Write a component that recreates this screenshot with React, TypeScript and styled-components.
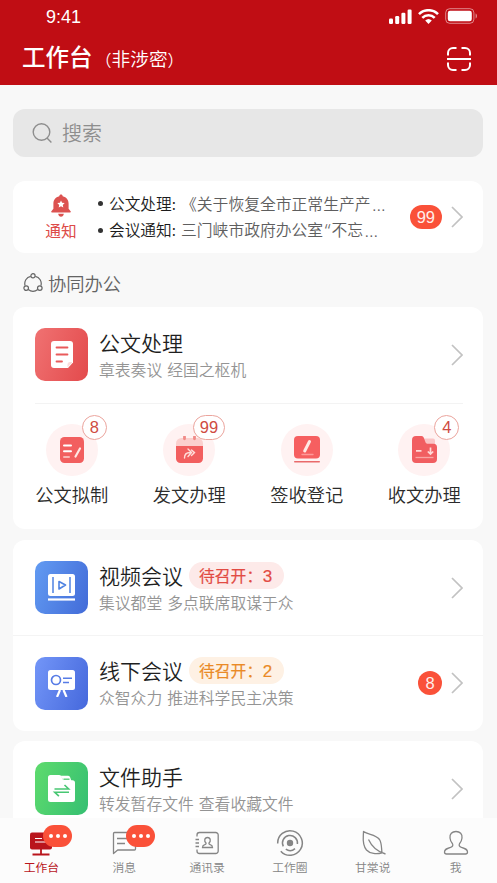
import React from "react";
import styled, { createGlobalStyle } from "styled-components";

const cjk = `"Noto Sans CJK SC DemiLight", "Noto Sans CJK SC", sans-serif`;

const Global = createGlobalStyle`
  * { box-sizing: border-box; }
  body { margin: 0; }
`;

const Screen = styled.div`
  display: flex;
  flex-direction: column;
  width: 497px;
  height: 883px;
  overflow: hidden;
  background: #f8f8f8;
  font-family: ${cjk};
  font-weight: 350;
  color: #2b2b2b;
  svg { display: block; flex: none; }
`;

const Header = styled.header`
  flex: none;
  height: 85px;
  background: #c00d14;
  color: #fff;
`;

const StatusBar = styled.div`
  display: flex;
  align-items: center;
  justify-content: space-between;
  height: 34px;
  padding: 0 19px 0 46px;
`;

const Clock = styled.span`
  font: 400 18px/34px "Liberation Sans", sans-serif;
`;

const StatusIcons = styled.div`
  display: flex;
  align-items: center;
  gap: 6px;
  padding-bottom: 2px;
`;

const TitleBar = styled.div`
  display: flex;
  align-items: center;
  height: 50px;
  padding: 0 25px 0 22px;
`;

const PageTitle = styled.h1`
  margin: 0;
  padding-bottom: 7px;
  font: 500 23.5px/40px "Noto Sans CJK SC Medium", "Noto Sans CJK SC", sans-serif;
`;

const PageNote = styled.span`
  flex: 1;
  padding: 0 0 2px 3px;
  font-size: 18.7px;
  line-height: 40px;
`;

const Paren = styled.span`
  font-size: 16px;
`;

const Content = styled.main`
  flex: 1;
  min-height: 0;
  overflow: hidden;
  padding: 24px 14px 0 13px;
`;

const SearchBox = styled.div`
  display: flex;
  align-items: center;
  gap: 10px;
  height: 48px;
  padding-left: 19px;
  border-radius: 12px;
  background: #e7e7e7;
  color: #8e8e8e;
  font-size: 20px;
  line-height: 48px;
`;

const Card = styled.section<{ $gap: number; $height?: number }>`
  margin-top: ${(p) => p.$gap}px;
  height: ${(p) => (p.$height ? `${p.$height}px` : "auto")};
  border-radius: 12px;
  background: #fff;
`;

const NoticeCard = styled(Card)`
  display: flex;
  align-items: center;
  padding-right: 20px;
`;

const NoticeLabel = styled.div`
  display: flex;
  flex-direction: column;
  align-items: center;
  gap: 1px;
  width: 96px;
  padding-top: 3px;
  color: #dd4b48;
  font-size: 15.7px;
  font-weight: 400;
  line-height: 25px;
  font-family: "Noto Sans CJK SC", sans-serif;
`;

const NoticeList = styled.ul`
  flex: 1;
  margin: 0 0 0 -11px;
  padding: 0;
  list-style: none;
`;

const NoticeItem = styled.li`
  display: flex;
  align-items: center;
  height: 26.5px;
  font-size: 15.8px;
  line-height: 26px;
  white-space: nowrap;
  color: #5e5e5e;
  &::before {
    content: "";
    width: 5px;
    height: 5px;
    margin-right: 6px;
    border-radius: 50%;
    background: #333;
  }
`;

const NoticeKind = styled.b`
  margin-right: 5px;
  font-size: 15.7px;
  font-weight: 350;
  color: #1c1c1c;
`;

/* Quotes and ellipses take their narrow Latin forms. */
const Punct = styled.span`
  margin: 0 1px 0 1.5px;
  font-family: "Noto Sans", sans-serif;
  font-size: 18.5px;
  font-weight: 300;
`;

const CountBadge = styled.span`
  min-width: 24px;
  height: 24px;
  margin-right: 9px;
  padding: 0 7px;
  border-radius: 12px;
  background: #fa5139;
  color: #ffeeea;
  text-align: center;
  font: 400 16.5px/24px "Liberation Sans", sans-serif;
`;

const SectionTitle = styled.h2`
  display: flex;
  align-items: center;
  gap: 5px;
  height: 54.5px;
  margin: 0;
  padding: 6px 0 0 10px;
  font-size: 18.3px;
  font-weight: 350;
  line-height: 46px;
  color: #636363;
`;

const Row = styled.div<{ $divided?: boolean }>`
  display: flex;
  align-items: center;
  height: 95.5px;
  padding: ${(p) => (p.$divided ? "1px" : "0")} 20px 0 22px;
  border-bottom: ${(p) => (p.$divided ? "1px solid #f4f4f4" : "0")};
`;

const AppIcon = styled.div<{ $from: string; $to: string }>`
  display: flex;
  align-items: center;
  justify-content: center;
  width: 53px;
  height: 53px;
  border-radius: 10px;
  background: linear-gradient(110deg, ${(p) => p.$from}, ${(p) => p.$to});
`;

const RowText = styled.div`
  flex: 1;
  margin-left: 11px;
`;

const RowTitle = styled.div`
  display: flex;
  align-items: center;
  height: 29px;
  font-size: 21px;
  line-height: 29px;
  color: #1f1f1f;
`;

const RowNote = styled.div`
  height: 25px;
  font-size: 15.8px;
  line-height: 25px;
  word-spacing: 1.5px;
  color: #949494;
`;

const Tag = styled.span<{ $color: string; $bg: string }>`
  width: 95px;
  height: 27px;
  margin-left: 6px;
  padding-left: 10px;
  border-radius: 14px;
  background: ${(p) => p.$bg};
  color: ${(p) => p.$color};
  font: 400 15.8px/27px "Noto Sans CJK SC", sans-serif;
  -webkit-text-stroke: 0.2px currentColor;
`;

const TagCount = styled.span`
  margin-left: 0.5px;
  font: 400 17px/27px "Liberation Sans", sans-serif;
`;

const Divider = styled.div`
  height: 1px;
  margin: 0 20px 0 22px;
  background: #f3f3f3;
`;

const Actions = styled.div`
  display: grid;
  grid-template-columns: repeat(4, 1fr);
  padding-top: 20px;
`;

const Action = styled.div`
  display: flex;
  flex-direction: column;
  align-items: center;
  font-size: 18.3px;
  line-height: 28px;
`;

const ActionIcon = styled.div`
  position: relative;
  display: flex;
  align-items: center;
  justify-content: center;
  width: 52px;
  height: 52px;
  margin-bottom: 4px;
  border-radius: 50%;
  background: #fff2f2;
`;

const ActionBadge = styled.span<{ $wide: boolean }>`
  position: absolute;
  left: ${(p) => (p.$wide ? 29.5 : 36)}px;
  top: -9px;
  min-width: 25px;
  height: 25px;
  padding: 0 6px;
  border: 1px solid #eba49d;
  border-radius: 13px;
  background: #fff;
  color: #cf4b42;
  text-align: center;
  font: 400 16.5px/23px "Liberation Sans", sans-serif;
`;

const TabBar = styled.nav`
  flex: none;
  display: grid;
  grid-template-columns: repeat(6, 1fr);
  height: 65px;
  background: #fcfcfc;
`;

const Tab = styled.div<{ $active?: boolean }>`
  display: flex;
  flex-direction: column;
  align-items: center;
  padding-top: 10.5px;
  color: ${(p) => (p.$active ? "#b9151c" : "#858585")};
  font-size: 11.8px;
  line-height: 19px;
  font-weight: ${(p) => (p.$active ? 400 : 350)};
  ${(p) => p.$active && `font-family: "Noto Sans CJK SC", sans-serif;`}
`;

const TabIcon = styled.div`
  position: relative;
  width: 28px;
  height: 28px;
`;

const MoreBadge = styled.span`
  position: absolute;
  left: 16px;
  top: -4px;
  display: flex;
  align-items: center;
  justify-content: center;
  gap: 3px;
  width: 29px;
  height: 22px;
  border-radius: 11px;
  background: #fa5139;
`;

const Dot = styled.i`
  width: 4px;
  height: 4px;
  border-radius: 50%;
  background: #fff;
`;

const Chevron = () => (
  <svg width="12" height="22" viewBox="0 0 12 22" fill="none" stroke="#c2c2c2" strokeWidth="1.7">
    <path d="M1 1l10 10L1 21" />
  </svg>
);

const Signal = () => (
  <svg width="23" height="15" viewBox="0 0 23 15" fill="#fff">
    <rect x="0" y="9.5" width="4" height="5.5" rx="1.2" />
    <rect x="6.2" y="7" width="4" height="8" rx="1.2" />
    <rect x="12.4" y="3.8" width="4" height="11.2" rx="1.2" />
    <rect x="18.6" y="0.5" width="4" height="14.5" rx="1.2" />
  </svg>
);

const Wifi = () => (
  <svg width="21" height="15" viewBox="0 0 21 15" fill="none" stroke="#fff" strokeWidth="2.6">
    <path d="M1 5.1a13.6 13.6 0 0 1 19 0M4.3 8.8a8.8 8.8 0 0 1 12.4 0" />
    <path d="M7.2 11.6a4.8 4.8 0 0 1 6.6 0L10.5 15z" fill="#fff" stroke="none" />
  </svg>
);

const Battery = () => (
  <svg width="33" height="16" viewBox="0 0 33 16">
    <rect x="0.7" y="0.7" width="28.2" height="14.6" rx="4" fill="none" stroke="#fff" strokeOpacity=".5" />
    <rect x="2.8" y="2.7" width="24" height="10.6" rx="2.2" fill="#fff" />
    <path d="M30.6 5.5c1.8.6 1.8 4.4 0 5z" fill="#fff" fillOpacity=".55" />
  </svg>
);

const Scan = () => (
  <svg width="26" height="26" viewBox="0 0 26 26" fill="none" stroke="#fff" strokeWidth="2">
    <path d="M2 9.5V7a5 5 0 0 1 5-5h3.500M15.500 2H19a5 5 0 0 1 5 5v2.500M2 16.500V19a5 5 0 0 0 5 5h3.500M15.500 24H19a5 5 0 0 0 5-5v-2.500M1 13h24" />
  </svg>
);

const SearchIcon = () => (
  <svg width="20" height="20" viewBox="0 0 20 20" fill="none" stroke="#8e8e8e" strokeWidth="1.4">
    <circle cx="9.500" cy="9" r="8.300" />
    <path d="M15 15l4.400 4.400" />
  </svg>
);

const Bell = () => (
  <svg width="20" height="23" viewBox="0 0 20 23" fill="#dc5250">
    <path d="M8.300 2.200C8.400-.1 11.600-.1 11.700 2.200 15.600 3 17.600 6 17.600 9.500v5.300l2 2.400c.5.600.2 1.200-.6 1.200H1c-.8 0-1.100-.6-.6-1.200l2-2.400V9.500C2.400 6 4.400 3 8.300 2.200z" />
    <path d="M7.200 19.800h5.600c-.2 3.800-5.400 3.800-5.600 0z" />
    <path d="M10 6.400l1.100 2.400 2.600.3-1.900 1.800.5 2.600-2.300-1.300-2.300 1.300.5-2.600-1.900-1.800 2.600-.3z" fill="#fff" />
  </svg>
);

const Collab = () => (
  <svg width="20" height="20" viewBox="0 0 20 20" fill="none" stroke="#666" strokeWidth="1.200">
    <path d="M7.700 3.300a7.300 7.300 0 0 0-5.600 9.300M12.300 3.300a7.300 7.300 0 0 1 5.600 9.300M5.200 16.600a8 8 0 0 0 9.600 0" />
    <circle cx="10" cy="2.800" r="2.100" />
    <circle cx="3.200" cy="15.100" r="2.300" />
    <circle cx="16.800" cy="15.100" r="2.300" />
  </svg>
);

const DocGlyph = () => (
  <svg width="22" height="27" viewBox="0 0 22 27">
    <path d="M3 0h16a3 3 0 0 1 3 3v18.500L17 27H3a3 3 0 0 1-3-3V3a3 3 0 0 1 3-3z" fill="#fff" />
    <path d="M16.500 26.500v-3a2.500 2.500 0 0 1 2.500-2.500h2.500z" fill="#fbdcdb" />
    <path d="M5.500 6.500h11M5.500 13.500h11M5.500 20.500h5.500" stroke="#e95a5b" strokeWidth="1.800" strokeLinecap="round" />
  </svg>
);

const VideoGlyph = () => (
  <svg width="27" height="27" viewBox="0 0 27 27" fill="none">
    <rect width="27" height="22" rx="2.500" fill="#fff" />
    <path d="M5 3v16M22 3v16" stroke="#4f83e2" strokeWidth="1.500" />
    <path d="M11 7.500l6.500 3.500-6.500 4z" stroke="#4f83e2" strokeWidth="1.600" strokeLinejoin="round" />
    <path d="M0 25.500h27" stroke="#fff" strokeWidth="2.200" />
  </svg>
);

const BoardGlyph = () => (
  <svg width="27" height="27" viewBox="0 0 27 27" fill="none">
    <rect width="27" height="20" rx="2.500" fill="#fff" />
    <circle cx="8" cy="10" r="4.500" stroke="#577ce6" strokeWidth="1.700" />
    <path d="M15 8.200h9M15 12.500h6" stroke="#577ce6" strokeWidth="1.600" />
    <path d="M12 20l-3 7M15.500 20l3 7" stroke="#fff" strokeWidth="2.200" />
  </svg>
);

const TransferGlyph = () => (
  <svg width="27" height="27" viewBox="0 0 27 27" fill="none">
    <path d="M2.500 0H11c2 0 2.600 1.500 3.200 3.200.5 1.600 1.200 2 2.800 2h7.500a2.500 2.500 0 0 1 2.500 2.500v16.800a2.500 2.500 0 0 1-2.500 2.500h-22A2.500 2.500 0 0 1 0 24.500v-22A2.500 2.500 0 0 1 2.500 0z" fill="#fff" />
    <path d="M12.500.800H20c1.600 0 2 1 2.500 2.500l1 3H16z" fill="#fff" />
    <path d="M15.500 4.200h6" stroke="#4ccb70" strokeWidth="1.300" />
    <path d="M6.500 14h14.200l-4.200-4M21 17.200H6.700l4.200 4" stroke="#48c773" strokeWidth="1.600" />
  </svg>
);

const DraftGlyph = () => (
  <svg width="24" height="26" viewBox="0 0 24 26" fill="none" stroke="#fff" strokeLinecap="round">
    <rect width="24" height="26" rx="4.500" fill="#f25f5f" stroke="none" />
    <path d="M4 8.500h7M4 14.300h7" strokeWidth="2" />
    <path d="M4 20h5" stroke="#f9b6b4" strokeWidth="2" />
    <path d="M20 11.500l-4.500 8" strokeWidth="2.200" stroke="#ffe8e4" />
  </svg>
);

const SendGlyph = () => (
  <svg width="27" height="27" viewBox="0 0 27 27" fill="none">
    <path d="M0 10V7.500A5.500 5.500 0 0 1 5.500 2h16A5.500 5.500 0 0 1 27 7.500V10z" fill="#fbd0ce" />
    <path d="M8.500.8v2M18.500.8v2" stroke="#f18b88" strokeWidth="2.800" strokeLinecap="round" />
    <path d="M0 10h27v12.500a4.500 4.500 0 0 1-4.500 4.500h-18A4.500 4.500 0 0 1 0 22.500z" fill="#f25f5f" />
    <path d="M8.500 22c0-3.500 2-5.500 5.500-5.500M12 13l3.500 3.500-3.500 4M15.500 14l3 2.600-3 3" stroke="#ffdeda" strokeWidth="1.400" strokeLinecap="round" />
  </svg>
);

const SignGlyph = () => (
  <svg width="26" height="27" viewBox="0 0 26 27" fill="none" strokeLinecap="round">
    <rect width="26" height="22.500" rx="4" fill="#f65f60" />
    <path d="M15.500 5.500l-4.800 9.500" stroke="#ffe9e5" strokeWidth="3" />
    <path d="M8 18.500h11" stroke="#f99" strokeWidth="1.300" />
    <path d="M.7 25.800h24.600" stroke="#e96a6b" strokeWidth="1.400" />
  </svg>
);

const InboxGlyph = () => (
  <svg width="25" height="27" viewBox="0 0 25 27" fill="none">
    <path d="M10 2.500h11a2 2 0 0 1 2 2V10H10z" fill="#fac6c7" />
    <path d="M4 0h5.500c1.500 0 2 1 2.700 2.800l1.100 3c.5 1.500 1.200 2 2.700 2h5.500A3.500 3.500 0 0 1 25 11.300V23a4 4 0 0 1-4 4H4a4 4 0 0 1-4-4V4a4 4 0 0 1 4-4z" fill="#f15e61" />
    <path d="M4 14.800h5.500M18.500 11.500v6M15.800 15.500l2.700 2.600 2.700-2.600" stroke="#ffd9d7" strokeWidth="1.700" />
    <path d="M3.500 21.500h18" stroke="#f9a5a5" strokeWidth="1.300" />
  </svg>
);

const line = { width: 28, height: 28, viewBox: "0 0 28 28", fill: "none", stroke: "currentColor", strokeWidth: 1.3 };

const DeskTab = () => (
  <svg {...line}>
    <rect x="3" y="3.500" width="22" height="17" rx="2" fill="currentColor" stroke="none" />
    <path d="M8 9.500h7M8 13h12" stroke="#fff" strokeWidth="1.200" />
    <path d="M14 20v5M5.500 25.500h17" strokeWidth="1.800" />
  </svg>
);
const MessageTab = () => (
  <svg {...line}>
    <path d="M4.500 3.500h20a1 1 0 0 1 1 1V20a1 1 0 0 1-1 1H7.700l-4.200 3.500v-20a1 1 0 0 1 1-1z" strokeLinejoin="round" />
    <path d="M7 9.500h12M7 14.500h8" />
  </svg>
);
const ContactsTab = () => (
  <svg {...line}>
    <path d="M4 7.500V6a2.500 2.500 0 0 1 2.500-2.500h16.200A2.500 2.500 0 0 1 25.200 6v16a2.500 2.500 0 0 1-2.500 2.500H6.500A2.500 2.500 0 0 1 4 22v-1.500M2.500 10.500h3.500M2.500 14h3.500M2.500 17.500h3.500" />
    <path d="M14.500 8.500c3.300 0 3.400 3.800 1.600 5.300-.4.900 0 1.500 1.100 1.900 1.700.5 2.300 1 2.300 2.800h-10c0-1.800.6-2.300 2.300-2.800 1.100-.4 1.500-1 1.100-1.900-1.800-1.500-1.700-5.300 1.600-5.300z" />
  </svg>
);
const CircleTab = () => (
  <svg {...line} strokeWidth={1.5}>
    <circle cx="14" cy="14" r="3.200" fill="currentColor" stroke="none" />
    <path d="M21.400 15A7.500 7.500 0 1 0 7.300 17.400M9.800 20.200a7.500 7.500 0 0 0 9.200-.6" />
    <path d="M1.700 14.500A12.300 12.300 0 1 1 4.800 22.200" />
  </svg>
);
const LeafTab = () => (
  <svg {...line}>
    <path d="M4.500 2.500c5 3.500 12 2.500 16 8 2.300 3.500 1.800 8 2.500 13.300-5 1.500-12 1.200-15.500-2.800C2.500 15 4.500 8 4.500 2.500zM9.500 10.500c3 6.500 8 12 17 14.500" strokeLinejoin="round" />
  </svg>
);
const MeTab = () => (
  <svg {...line}>
    <path d="M14 2.500c-4 0-6.500 2.500-6 6.500.3 2.800 1.300 4.500 2.500 5.800.8 1.500.2 2.700-2 3.500-4 1.300-6 2-6 4.700 0 1.500.8 2 2 2h19c1.200 0 2-.5 2-2 0-2.700-2-3.400-6-4.700-2.200-.8-2.800-2-2-3.500 1.200-1.300 2.200-3 2.500-5.800.5-4-2-6.500-6-6.500z" />
  </svg>
);

const actions = [
  { label: "公文拟制", count: "8", icon: <DraftGlyph /> },
  { label: "发文办理", count: "99", icon: <SendGlyph /> },
  { label: "签收登记", count: "", icon: <SignGlyph /> },
  { label: "收文办理", count: "4", icon: <InboxGlyph /> },
];

const tabs = [
  { label: "工作台", icon: <DeskTab />, active: true, more: true },
  { label: "消息", icon: <MessageTab />, more: true },
  { label: "通讯录", icon: <ContactsTab /> },
  { label: "工作圈", icon: <CircleTab /> },
  { label: "甘棠说", icon: <LeafTab /> },
  { label: "我", icon: <MeTab /> },
];

type EntryProps = {
  title: string;
  note: string;
  from: string;
  to: string;
  icon: React.ReactNode;
  tag?: { count: string; color: string; bg: string };
  badge?: string;
  divided?: boolean;
};

const Entry = ({ title, note, from, to, icon, tag, badge, divided }: EntryProps) => (
  <Row $divided={divided}>
    <AppIcon $from={from} $to={to}>{icon}</AppIcon>
    <RowText>
      <RowTitle>
        {title}
        {tag && (
          <Tag $color={tag.color} $bg={tag.bg}>
            待召开：<TagCount>{tag.count}</TagCount>
          </Tag>
        )}
      </RowTitle>
      <RowNote>{note}</RowNote>
    </RowText>
    {badge && <CountBadge>{badge}</CountBadge>}
    <Chevron />
  </Row>
);

export default function App() {
  return (
    <Screen>
      <Global />
      <Header>
        <StatusBar>
          <Clock>9:41</Clock>
          <StatusIcons>
            <Signal />
            <Wifi />
            <Battery />
          </StatusIcons>
        </StatusBar>
        <TitleBar>
          <PageTitle>工作台</PageTitle>
          <PageNote>
            <Paren>（</Paren>非涉密<Paren>）</Paren>
          </PageNote>
          <Scan />
        </TitleBar>
      </Header>
      <Content>
        <SearchBox>
          <SearchIcon />
          搜索
        </SearchBox>
        <NoticeCard $gap={24} $height={71.5}>
          <NoticeLabel>
            <Bell />
            通知
          </NoticeLabel>
          <NoticeList>
            <NoticeItem>
              <NoticeKind>公文处理:</NoticeKind>《关于恢复全市正常生产产<Punct>…</Punct>
            </NoticeItem>
            <NoticeItem>
              <NoticeKind>会议通知:</NoticeKind>三门峡市政府办公室<Punct>“</Punct>不忘<Punct>…</Punct>
            </NoticeItem>
          </NoticeList>
          <CountBadge>99</CountBadge>
          <Chevron />
        </NoticeCard>
        <SectionTitle>
          <Collab />
          协同办公
        </SectionTitle>
        <Card $gap={0} $height={222}>
          <Entry title="公文处理" note="章表奏议 经国之枢机" from="#f07272" to="#e34a4c" icon={<DocGlyph />} />
          <Divider />
          <Actions>
            {actions.map((a) => (
              <Action key={a.label}>
                <ActionIcon>
                  {a.icon}
                  {a.count && <ActionBadge $wide={a.count.length > 1}>{a.count}</ActionBadge>}
                </ActionIcon>
                {a.label}
              </Action>
            ))}
          </Actions>
        </Card>
        <Card $gap={11} $height={191}>
          <Entry
            title="视频会议"
            note="集议都堂 多点联席取谋于众"
            from="#629bf2"
            to="#426bd8"
            icon={<VideoGlyph />}
            tag={{ count: "3", color: "#e24b43", bg: "#fdeae9" }}
            divided
          />
          <Entry
            title="线下会议"
            note="众智众力 推进科学民主决策"
            from="#7396f8"
            to="#4568dc"
            icon={<BoardGlyph />}
            tag={{ count: "2", color: "#ea8a26", bg: "#fef1e4" }}
            badge="8"
          />
        </Card>
        <Card $gap={10} $height={110}>
          <Entry title="文件助手" note="转发暂存文件 查看收藏文件" from="#5edb6d" to="#35bf72" icon={<TransferGlyph />} />
        </Card>
      </Content>
      <TabBar>
        {tabs.map((t) => (
          <Tab key={t.label} $active={t.active}>
            <TabIcon>
              {t.icon}
              {t.more && (
                <MoreBadge>
                  <Dot />
                  <Dot />
                  <Dot />
                </MoreBadge>
              )}
            </TabIcon>
            {t.label}
          </Tab>
        ))}
      </TabBar>
    </Screen>
  );
}
